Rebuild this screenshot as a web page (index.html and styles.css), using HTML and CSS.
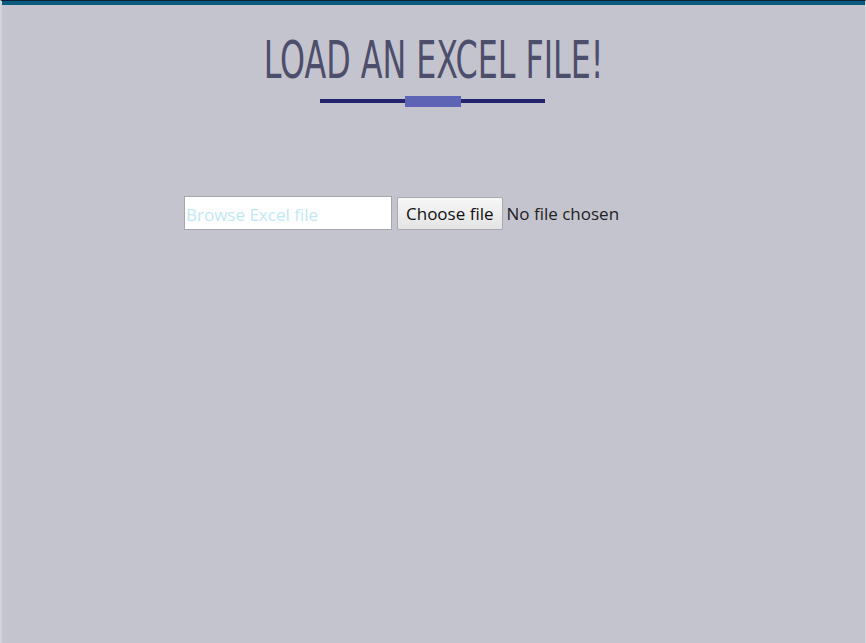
FILE: index.html
```html
<!DOCTYPE html>
<html>
<head>
<meta charset="utf-8">
<link rel="stylesheet" href="styles.css">
</head>
<body>
<div class="page">
  <header class="head">
    <h1 class="title"><span class="title-text">LOAD AN EXCEL FILE!</span></h1>
    <div class="rule"><span class="rule-mark"></span></div>
  </header>
  <form class="upload">
    <input class="name" type="text" placeholder="Browse Excel file">
    <span class="file">
      <span class="file-btn">Choose file</span>
      <span class="file-label">No file chosen</span>
    </span>
  </form>
</div>
</body>
</html>
```
FILE: styles.css
```css
html, body {
  margin: 0;
  padding: 0;
  height: 100%;
}
body {
  background: #c4c4ce;
  font-family: "Open Sans", "Noto Sans", sans-serif;
}
.page {
  box-sizing: border-box;
  height: 643px;
  border-top: 1px solid #0b2030;
  box-shadow: inset 0 4px 0 #0b5a80;
  border-left: 2px solid #d2d2da;
  border-right: 1px solid #d8d8e0;
  padding-top: 29px;
}
.head {
  display: flex;
  flex-direction: column;
  align-items: center;
}
.title {
  margin: 0;
  height: 62px;
  display: flex;
  justify-content: center;
  align-items: center;
  font-family: "DejaVu Sans Condensed", "DejaVu Sans", sans-serif;
  font-weight: normal;
  font-size: 51px;
  color: #4d4e6c;
  line-height: 62px;
}
.title-text {
  display: inline-block;
  transform: scaleX(0.692);
  white-space: nowrap;
  letter-spacing: 0;
}
.rule {
  margin-top: 7px;
  width: 225px;
  height: 4px;
  background: #22246e;
  display: flex;
  justify-content: center;
  align-items: center;
  margin-left: -2px;
}
.rule-mark {
  flex: none;
  width: 56px;
  height: 11px;
  background: #5d64b6;
  margin-left: 0;
}
.upload {
  margin: 93px 0 0 182px;
  display: flex;
  align-items: center;
  gap: 5px;
}
.name {
  box-sizing: border-box;
  width: 208px;
  height: 34px;
  border: 1px solid #a6a6ae;
  background: #fff;
  padding: 2px 1px 0;
  font-family: "Open Sans", "Noto Sans", sans-serif;
  font-size: 17px;
  outline: none;
}
.name::placeholder {
  color: #bfe9f6;
}
.file {
  display: flex;
  align-items: center;
  gap: 4px;
  font-size: 17px;
  color: #222;
}
.file-btn {
  box-sizing: border-box;
  height: 33px;
  padding: 0 8px;
  display: flex;
  align-items: center;
  border: 1px solid #a9a9ae;
  border-radius: 2px;
  background: linear-gradient(#f7f7f7, #e4e4e4);
  color: #111;
}
```
